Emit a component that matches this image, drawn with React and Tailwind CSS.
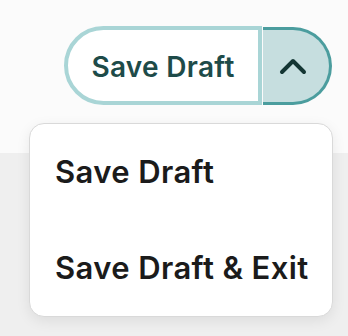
import React from "react";

export default function App() {
  return (
    <div
      className="relative w-[348px] h-[336px] bg-[#efefef] overflow-hidden"
      style={{ fontFamily: "Inter, 'Noto Sans', sans-serif" }}
    >
      <div className="h-[153px] bg-[#fbfbfb] flex justify-end items-start pt-[26px] pr-[16px]">
        <div className="flex items-stretch gap-[1px]">
          <button className="h-[79px] w-[198px] rounded-l-full border-[4px] border-[#a9d5d6] bg-white flex items-center justify-center pt-[2px] text-[28px] leading-[32px] font-semibold text-[#1e4b49] tracking-[0.3px]">
            Save Draft
          </button>
          <button className="mt-[1px] h-[78px] w-[69px] rounded-r-full border-[3.5px] border-l-0 border-[#4b9d9e] bg-[#c6dedf] flex items-center justify-center pr-[6px]">
            <svg width="28" height="18" viewBox="0 0 28 18" fill="none">
              <path
                d="M3 15 L14 4 L25 15"
                stroke="#143634"
                strokeWidth="4"
                strokeLinecap="round"
                strokeLinejoin="round"
              />
            </svg>
          </button>
        </div>
      </div>
      <div className="absolute left-[29px] top-[123px] w-[304px] rounded-[15px] border border-[#d9d9d9] bg-white shadow-[0_4px_14px_rgba(0,0,0,0.08)]">
        <div className="py-[30px] pl-[25px] text-[31px] leading-[36px] font-semibold text-[#1b1b1b] tracking-[0.4px]">
          Save Draft
        </div>
        <div className="py-[30px] pl-[25px] text-[31px] leading-[36px] font-semibold text-[#1b1b1b] tracking-[0.4px]">
          Save Draft &amp; Exit
        </div>
      </div>
    </div>
  );
}
